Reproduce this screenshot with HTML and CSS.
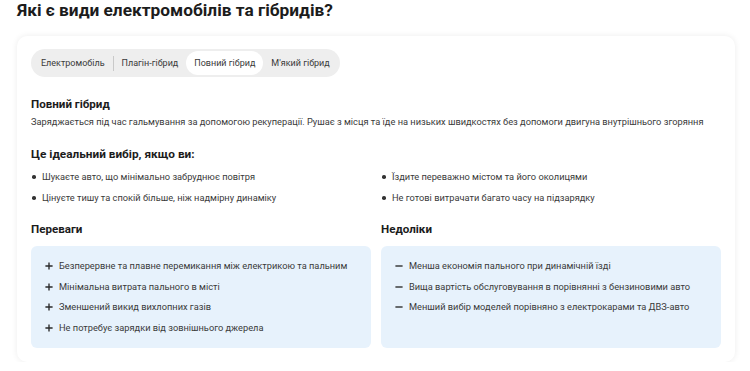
FILE: index.html
```html
<!DOCTYPE html>
<html lang="uk">
<head>
  <meta charset="utf-8" />
  <meta name="viewport" content="width=device-width, initial-scale=1" />
  <title>Які є види електромобілів та гібридів?</title>
  <link rel="stylesheet" href="styles.css">
</head>
<body>

  <h1 class="title">Які є види електромобілів та гібридів?</h1>

  <section class="card">
    <nav class="tabs">
      <button class="tab">Електромобіль</button>
      <span class="sep"></span>
      <button class="tab">Плагін-гібрид</button>
      <button class="tab active">Повний гібрид</button>
      <button class="tab">М'який гібрид</button>
    </nav>

    <h2 class="type-name">Повний гібрид</h2>
    <p class="type-desc">Заряджається під час гальмування за допомогою рекуперації. Рушає з місця та їде на низьких швидкостях без допомоги двигуна внутрішнього згоряння</p>

    <h3 class="fit-title">Це ідеальний вибір, якщо ви:</h3>
    <ul class="fit-list">
      <li>Шукаєте авто, що мінімально забруднює повітря</li>
      <li>Цінуєте тишу та спокій більше, ніж надмірну динаміку</li>
      <li>Їздите переважно містом та його околицями</li>
      <li>Не готові витрачати багато часу на підзарядку</li>
    </ul>

    <div class="pros-cons">
      <div class="col">
        <h4 class="col-title">Переваги</h4>
        <ul class="box">
          <li><svg class="ico" viewBox="0 0 10 10"><path d="M5 0.5v9M0.5 5h9" /></svg>Безперервне та плавне перемикання між електрикою та пальним</li>
          <li><svg class="ico" viewBox="0 0 10 10"><path d="M5 0.5v9M0.5 5h9" /></svg>Мінімальна витрата пального в місті</li>
          <li><svg class="ico" viewBox="0 0 10 10"><path d="M5 0.5v9M0.5 5h9" /></svg>Зменшений викид вихлопних газів</li>
          <li><svg class="ico" viewBox="0 0 10 10"><path d="M5 0.5v9M0.5 5h9" /></svg>Не потребує зарядки від зовнішнього джерела</li>
        </ul>
      </div>
      <div class="col">
        <h4 class="col-title">Недоліки</h4>
        <ul class="box">
          <li><svg class="ico" viewBox="0 0 10 10"><path d="M0.5 5h9" /></svg>Менша економія пального при динамічній їзді</li>
          <li><svg class="ico" viewBox="0 0 10 10"><path d="M0.5 5h9" /></svg>Вища вартість обслуговування в порівнянні з бензиновими авто</li>
          <li><svg class="ico" viewBox="0 0 10 10"><path d="M0.5 5h9" /></svg>Менший вибір моделей порівняно з електрокарами та ДВЗ-авто</li>
        </ul>
      </div>
    </div>
  </section>

</body>
</html>
```

FILE: styles.css
```css
* {
  box-sizing: border-box;
}
html, body {
  margin: 0;
  padding: 0;
}
h1, h2, h3, h4, p, ul {
  margin: 0;
  padding: 0;
}
ul {
  list-style: none;
}
button {
  border: none;
  background: none;
  font: inherit;
  color: inherit;
  cursor: pointer;
}

/* style */
body {
  padding: 0 14px 0 17px;
  font-family: Roboto, Arial, sans-serif;
  color: #222;
  background: #fff;
}
.title {
  font-size: 17.3px;
  line-height: 20px;
  font-weight: 700;
  color: #1c1c1c;
  margin-bottom: 16px;
}

.card {
  width: 718px;
  padding: 14px;
  border-radius: 10px;
  background: #fff;
  box-shadow: 0 0 6px rgba(0, 0, 0, 0.08);
}

.tabs {
  display: inline-flex;
  align-items: center;
  height: 28px;
  padding: 2px;
  margin-top: -1px;
  border-radius: 14px;
  background: #eeeeee;
}
.tab {
  height: 24px;
  padding: 0 8px;
  font-size: 9px;
  color: #3a3a3a;
  border-radius: 12px;
}
.tab.active {
  background: #fff;
}
.sep {
  width: 1px;
  height: 15px;
  background: #c9c9c9;
}

.type-name {
  margin-top: 19px;
  font-size: 11.6px;
  line-height: 16px;
  font-weight: 700;
  color: #1c1c1c;
}
.type-desc {
  margin-top: 3px;
  font-size: 9.25px;
  line-height: 14px;
  color: #3a3a3a;
}

.fit-title {
  margin-top: 17px;
  font-size: 11.8px;
  line-height: 16px;
  font-weight: 700;
  color: #1c1c1c;
}
.fit-list {
  display: grid;
  grid-template-columns: 1fr 1fr;
  grid-template-rows: auto auto;
  grid-auto-flow: column;
  column-gap: 10px;
  margin-top: 4px;
}
.fit-list li {
  position: relative;
  padding-left: 11px;
  font-size: 9.25px;
  line-height: 21px;
  color: #3a3a3a;
}
.fit-list li::before {
  content: "";
  position: absolute;
  left: 1px;
  top: 9px;
  width: 3.5px;
  height: 3.5px;
  border-radius: 50%;
  background: #333;
}

.pros-cons {
  display: grid;
  grid-template-columns: 1fr 1fr;
  column-gap: 10px;
  margin-top: 13px;
}
.col-title {
  font-size: 11.6px;
  line-height: 16px;
  font-weight: 700;
  color: #1c1c1c;
}
.box {
  height: 102px;
  margin-top: 9px;
  padding: 10px 14px;
  border-radius: 6px;
  background: #e7f2fc;
}
.box li {
  display: flex;
  align-items: center;
  gap: 6px;
  font-size: 9.25px;
  line-height: 20.5px;
  color: #3a3a3a;
}
.ico {
  width: 8px;
  height: 8px;
  flex: none;
  fill: none;
  stroke: #2a2a2a;
  stroke-width: 1.7;
}
```
